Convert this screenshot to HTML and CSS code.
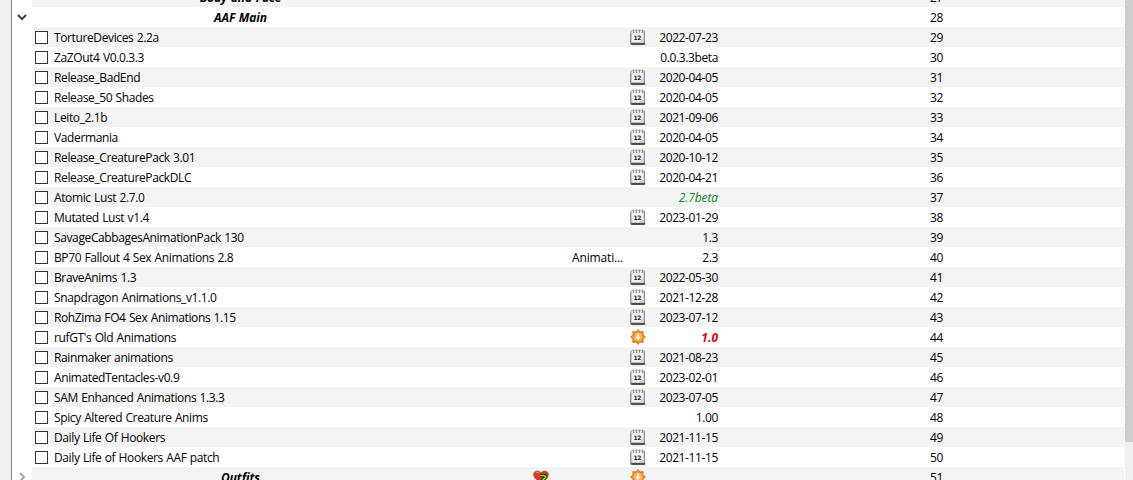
FILE: index.html
```html
<!DOCTYPE html>
<html lang="en">

<head>
    <meta charset="UTF-8">
    <meta name="viewport" content="width=device-width, initial-scale=1.0">
    <title>Mod List</title>
    <link rel="stylesheet" href="styles.css">
</head>

<body>
    <!-- Icons -->
    <svg class="icon-defs" width="0" height="0">
        <symbol id="icon-calendar" viewBox="0 0 16 17">
            <path d="M3 14h13v2.300H3z" fill="#d2d2d0"/>
            <rect x="0.500" y="3" width="14.500" height="13" rx="1.500" fill="#50544f"/>
            <rect x="0.500" y="1.500" width="14.500" height="12.500" rx="1.200" fill="#8f928c"/>
            <rect x="1.500" y="2" width="12.200" height="11.500" fill="#f2f2f0"/>
            <path d="M9.500 13.500l4.200-4.200v4.200z" fill="#d0d2cd"/>
            <path d="M3.500 .5v3.500M6.500 .5v3.500M9.500 .5v3.500M12.500 .5v3.500" stroke="#8a8d87" stroke-width="1.200"/>
            <path d="M2.500 1h1M5.500 1h1M8.500 1h1M11.500 1h1" stroke="#bbb" stroke-width="1"/>
            <text x="7.300" y="10.500" text-anchor="middle" class="calendar-day">12</text>
        </symbol>
        <symbol id="icon-update" viewBox="0 0 16 16">
            <path d="M8 .6l2 2.400 3.200-.4-.3 3.100L15.400 8l-2.500 2.200.3 3.200-3.200-.4L8 15.400 6 13l-3.200.4.3-3.200L.6 8l2.500-2.300-.3-3.100L6 3z" fill="#f7942f" stroke="#cd6a1c" stroke-width=".9"/>
            <circle cx="8" cy="8" r="4" fill="#fbb562"/>
            <path d="M7.100 4.200h1.800v3.600h2L8 11.200 5.100 7.800h2z" fill="#fff3dd"/>
        </symbol>
        <symbol id="icon-heart" viewBox="0 0 16 16">
            <path d="M8 15L2 9C-.8 5.500 1 2 4.300 2 6 2 7.300 2.800 8 4c.7-1.200 2-2 3.700-2C15 2 16.800 5.500 14 9z" fill="#d83a26" stroke="#b8453a" stroke-width=".7"/>
            <path d="M3 4.200c1-1 2.500-.8 3.200 0" fill="none" stroke="#f28a78" stroke-width="1.200"/>
            <path d="M7 6.500h3.500c2.300 0 2.800 1.800 1 3-1.500 1-2.300 1.800-2.300 4.500" fill="none" stroke="#1c2c08" stroke-width="3.600"/>
            <path d="M7 6.500h3.500c2.300 0 2.800 1.800 1 3-1.500 1-2.300 1.800-2.300 4.500" fill="none" stroke="#93d321" stroke-width="1.700"/>
        </symbol>
    </svg>

    <div class="window">
        <div class="side"></div>
        <div class="mod-list" id="mod-list"></div>
        <div class="scrollbar">
            <div class="scrollbar-thumb"></div>
        </div>
    </div>

    <script>
        const mods = [
            { name: 'Body and Face', separator: true },
            { name: 'AAF Main', separator: true, arrow: 'open' },
            { name: 'TortureDevices 2.2a', icon: 'calendar', version: '2022-07-23' },
            { name: 'ZaZOut4 V0.0.3.3', version: '0.0.3.3beta' },
            { name: 'Release_BadEnd', icon: 'calendar', version: '2020-04-05' },
            { name: 'Release_50 Shades', icon: 'calendar', version: '2020-04-05' },
            { name: 'Leito_2.1b', icon: 'calendar', version: '2021-09-06' },
            { name: 'Vadermania', icon: 'calendar', version: '2020-04-05' },
            { name: 'Release_CreaturePack 3.01', icon: 'calendar', version: '2020-10-12' },
            { name: 'Release_CreaturePackDLC', icon: 'calendar', version: '2020-04-21' },
            { name: 'Atomic Lust 2.7.0', version: '2.7beta', state: 'newer' },
            { name: 'Mutated Lust v1.4', icon: 'calendar', version: '2023-01-29' },
            { name: 'SavageCabbagesAnimationPack 130', version: '1.3' },
            { name: 'BP70 Fallout 4 Sex Animations 2.8', category: 'Animati...', version: '2.3' },
            { name: 'BraveAnims 1.3', icon: 'calendar', version: '2022-05-30' },
            { name: 'Snapdragon Animations_v1.1.0', icon: 'calendar', version: '2021-12-28' },
            { name: 'RohZima FO4 Sex Animations 1.15', icon: 'calendar', version: '2023-07-12' },
            { name: "rufGT's Old Animations", icon: 'update', version: '1.0', state: 'outdated' },
            { name: 'Rainmaker animations', icon: 'calendar', version: '2021-08-23' },
            { name: 'AnimatedTentacles-v0.9', icon: 'calendar', version: '2023-02-01' },
            { name: 'SAM Enhanced Animations 1.3.3', icon: 'calendar', version: '2023-07-05' },
            { name: 'Spicy Altered Creature Anims', version: '1.00' },
            { name: 'Daily Life Of Hookers', icon: 'calendar', version: '2021-11-15' },
            { name: 'Daily Life of Hookers AAF patch', icon: 'calendar', version: '2021-11-15' },
            { name: 'Outfits', separator: true, arrow: 'closed', flag: 'heart', icon: 'update' }
        ];
        const firstPriority = 27;

        const arrows = {
            open: '<svg class="arrow" viewBox="0 0 12 12"><path d="M2 4l4 4 4-4"/></svg>',
            closed: '<svg class="arrow closed" viewBox="0 0 12 12"><path d="M4 2l4 4-4 4"/></svg>'
        };

        function icon(name) {
            return name ? `<svg class="icon icon-${name}"><use href="#icon-${name}"/></svg>` : '';
        }

        function renderRow(mod, index) {
            const name = mod.separator
                ? `<div class="name separator"><span class="text">${mod.name}</span></div>`
                : `<div class="name"><span class="checkbox"></span><span class="text">${mod.name}</span></div>`;

            return `<div class="row">
                <div class="branch">${arrows[mod.arrow] || ''}</div>
                <div class="cells">
                    ${name}
                    <div class="flags">${icon(mod.flag)}</div>
                    <div class="category"><span class="text">${mod.category || ''}</span></div>
                    <div class="version ${mod.state || ''}">${icon(mod.icon)}<span class="text">${mod.version || ''}</span></div>
                    <div class="priority"><span class="text">${firstPriority + index}</span></div>
                </div>
            </div>`;
        }

        document.getElementById('mod-list').innerHTML = mods.map(renderRow).join('');
    </script>
</body>

</html>
```
FILE: styles.css
```css
body {
    margin: 0;
    overflow: hidden;
    background-color: white;
    color: black;
    font-family: "Open Sans", "Noto Sans", sans-serif;
    font-size: 12px;
    letter-spacing: -0.38px;
    word-spacing: 0.6px;
}

.icon-defs {
    display: none;
}

.window {
    display: flex;
    height: 480px;
    overflow: hidden;
}

.side {
    width: 11px;
    background-color: #f0f0f0;
    border-right: 1px solid #828790;
}

/* Scrolled so that the first row is cut off at the top */
.mod-list {
    flex: 1;
    margin-top: -13px;
}

.row {
    display: flex;
    height: 20px;
    line-height: 18px;
    white-space: nowrap;
}

.branch {
    display: flex;
    align-items: center;
    justify-content: center;
    width: 19px;
    margin-right: 1px;
}

.arrow {
    width: 12px;
    height: 12px;
    fill: none;
    stroke: #404040;
    stroke-width: 2;
}

.arrow.closed {
    stroke: #a6a6a6;
}

.cells {
    display: grid;
    grid-template-columns: 417px 120px 58px 94px 1fr;
    flex: 1;
    margin-right: 1px;
}

.row:nth-child(odd) .cells {
    background-color: #f4f4f4;
}

.name,
.flags,
.category,
.version,
.priority {
    display: flex;
    align-items: center;
    height: 20px;
}

.text {
    padding-top: 2px;
}

.name {
    gap: 6px;
    padding-left: 3px;
}

.name.separator {
    justify-content: center;
    padding-left: 0;
    font-weight: bold;
    font-style: italic;
    letter-spacing: -0.1px;
}

.checkbox {
    box-sizing: border-box;
    width: 13px;
    height: 13px;
    background-color: white;
    border: 1px solid #333;
}

.flags {
    justify-content: flex-end;
    padding-right: 20px;
}

.category {
    padding-left: 3px;
    letter-spacing: -0.15px;
}

.version {
    padding: 0 3px;
}

.version .text {
    margin-left: auto;
}

.version.newer {
    color: #0b8a2a;
    font-style: italic;
    letter-spacing: -0.1px;
}

.version.outdated {
    color: #f00000;
    font-weight: bold;
    font-style: italic;
    letter-spacing: 0;
}

.icon {
    width: 16px;
    height: 16px;
}

.icon-calendar {
    height: 17px;
}

.calendar-day {
    font: bold 6px "DejaVu Sans", sans-serif;
    letter-spacing: -0.4px;
    word-spacing: 0;
    fill: #1c2022;
}

.priority {
    padding-left: 209px;
}

.scrollbar {
    width: 8px;
    background-color: #f0f0f0;
}

.scrollbar-thumb {
    height: 442px;
    background-color: #cdcdcd;
}
```
